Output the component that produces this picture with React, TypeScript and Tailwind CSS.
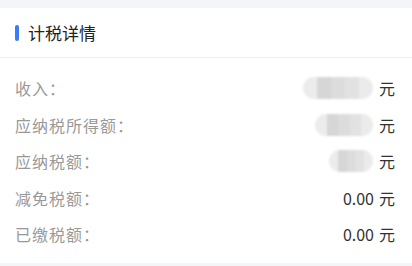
const rows = [
  { label: "收入：", blur: "w-[70px] h-[22px]", value: null },
  { label: "应纳税所得额：", blur: "w-[58px] h-[22px]", value: null },
  { label: "应纳税额：", blur: "w-[44px] h-[22px]", value: null },
  { label: "减免税额：", blur: "", value: "0.00" },
  { label: "已缴税额：", blur: "", value: "0.00" },
];

function Blurred({ size }: { size: string }) {
  return (
    <div className={`${size} flex overflow-hidden rounded-full blur-[1px]`}>
      <div className="flex-1 bg-[#ececec]" />
      <div className="flex-1 bg-[#d6d6d6]" />
      <div className="flex-1 bg-[#dcdcdc]" />
      <div className="flex-1 bg-[#e2e2e2]" />
      <div className="flex-1 bg-[#ebebeb]" />
    </div>
  );
}

export default function App() {
  return (
    <div
      className="w-[412px] h-[266px] bg-[#f4f5f9] pt-2 pb-[3px]"
      style={{ fontFamily: '"Noto Sans CJK SC", "Noto Sans", sans-serif' }}
    >
      <div className="bg-white h-full flex flex-col">
        {/* Header */}
        <div className="h-[50px] flex items-center px-[15px] border-b border-[#eeeeee]">
          <span className="w-1 h-4 rounded-full bg-[#3d7bf7]" />
          <span className="ml-[9px] text-[17px] text-[#222222] leading-none">计税详情</span>
        </div>

        {/* Rows */}
        <div className="flex flex-col pt-3 px-[15px]">
          {rows.map((r) => (
            <div key={r.label} className="h-[36.5px] flex items-center justify-between">
              <span className="text-[16px] text-[#999999] leading-none tracking-[1px]">{r.label}</span>
              <div className="flex items-center text-[16px] text-[#333333] leading-none pr-[2px]">
                {r.value ? (
                  <span className="mr-[5px]">{r.value}</span>
                ) : (
                  <div className="mr-[6px]">
                    <Blurred size={r.blur} />
                  </div>
                )}
                <span>元</span>
              </div>
            </div>
          ))}
        </div>
      </div>
    </div>
  );
}
